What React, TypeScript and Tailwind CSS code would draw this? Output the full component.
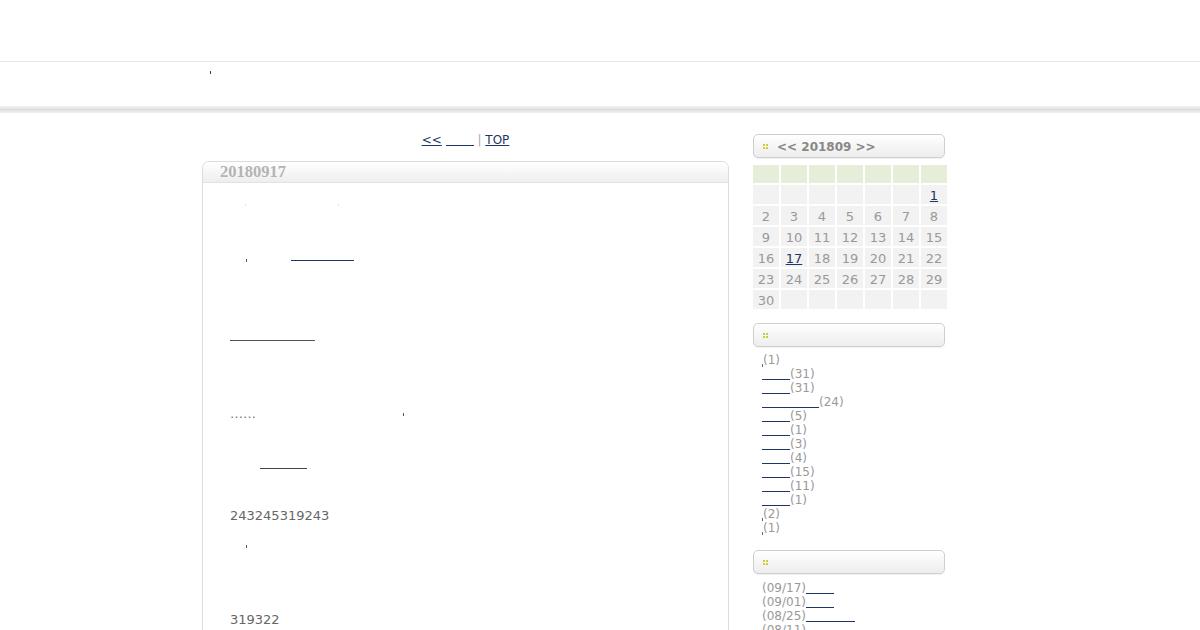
import React from "react";

const sans = { fontFamily: '"DejaVu Sans", Verdana, sans-serif' };

// link whose (missing-glyph) text shows only as an underline
function Blank({ w, c = "border-[#1c3767]", a = "align-[-2px]" }: { w: string; c?: string; a?: string }) {
  return <a href="#" className={`inline-block h-0 border-b ${a} ${w} ${c}`} />;
}

function Tick({ cls = "" }: { cls?: string }) {
  return <span className={`inline-block w-[1px] h-[3px] bg-[#555] align-middle ${cls}`} />;
}

function Dots() {
  return (
    <span className="inline-grid grid-cols-2 gap-[1px] w-[5px] mr-[9px] align-middle">
      <span className="w-[2px] h-[2px] bg-[#c9cc3f]" />
      <span className="w-[2px] h-[2px] bg-[#c9cc3f]" />
      <span className="w-[2px] h-[2px] bg-[#c9cc3f]" />
      <span className="w-[2px] h-[2px] bg-[#c9cc3f]" />
    </span>
  );
}

function BoxHead({ children }: { children?: React.ReactNode }) {
  return (
    <div className="h-[24px] border border-[#cfcfcf] rounded-[5px] bg-gradient-to-b from-white to-[#ededed] shadow-[0_1px_1px_rgba(0,0,0,0.06)] flex items-center pl-[9px] pt-[1px] text-[12px] font-bold text-[#888]">
      <Dots />
      {children}
    </div>
  );
}

const cats: { w?: string; n: string }[] = [
  { n: "(1)" },
  { w: "w-[28px]", n: "(31)" },
  { w: "w-[28px]", n: "(31)" },
  { w: "w-[57px]", n: "(24)" },
  { w: "w-[28px]", n: "(5)" },
  { w: "w-[28px]", n: "(1)" },
  { w: "w-[28px]", n: "(3)" },
  { w: "w-[28px]", n: "(4)" },
  { w: "w-[28px]", n: "(15)" },
  { w: "w-[28px]", n: "(11)" },
  { w: "w-[28px]", n: "(1)" },
  { n: "(2)" },
  { n: "(1)" },
];

const recent = [
  { d: "(09/17)", w: "w-[28px]" },
  { d: "(09/01)", w: "w-[28px]" },
  { d: "(08/25)", w: "w-[49px]" },
  { d: "(08/11)", w: "w-[28px]" },
];

export default function App() {
  const days: (number | null)[] = [null, null, null, null, null, null, 1];
  for (let i = 2; i <= 30; i++) days.push(i);
  while (days.length % 7) days.push(null);

  return (
    <div className="w-[1200px] h-[630px] overflow-hidden bg-white" style={sans}>
      {/* header */}
      <div className="h-[61px]" />
      <div className="h-[1px] bg-[#e6e6e6]" />
      <div className="h-[44px] relative">
        <span className="absolute left-[210px] top-[9px] w-[1px] h-[3px] bg-[#444]" />
      </div>
      <div className="h-[7px] bg-gradient-to-b from-[#f3f3f3] via-[#dedede] to-[#f1f1f1]" />

      <div className="w-[796px] mx-auto flex gap-[24px]">
        {/* main column */}
        <div className="w-[527px] shrink-0">
          <div className="pt-[18px] h-[48px] text-center text-[12px] leading-[18px] text-[#aaa]">
            <a href="#" className="text-[#1c3767] underline">&lt;&lt;</a>{" "}
            <Blank w="w-[28px]" /> |{" "}
            <a href="#" className="text-[#1c3767] underline">TOP</a>
          </div>

          <div className="border border-[#dcdcdc] rounded-t-[7px] h-[480px]">
            <div className="h-[21px] rounded-t-[7px] bg-gradient-to-b from-white to-[#eeeeee] border-b border-[#e2e2e2] pl-[17px] flex items-center">
              <span
                className="text-[16.5px] font-bold text-[#b4b4b4] leading-none"
                style={{ fontFamily: '"Liberation Serif", "DejaVu Serif", serif' }}
              >
                20180917
              </span>
            </div>
            <div className="pl-[27px] text-[13px] leading-[18px] text-[#666]">
              <div className="mt-[12px] h-[18px]">
                <span className="inline-block ml-[15px] w-[1px] h-[2px] bg-[#e6e6e6] align-middle" />
                <span className="inline-block ml-[92px] w-[1px] h-[2px] bg-[#e6e6e6] align-middle" />
              </div>
              <div className="mt-[38px] h-[18px]">
                <Tick cls="ml-[16px]" />
                <span className="ml-[44px]" />
                <Blank w="w-[63px]" a="align-[3px]" />
              </div>
              <div className="mt-[62px] h-[18px]">
                <Blank w="w-[85px]" c="border-[#555]" a="align-[3px]" />
              </div>
              <div className="mt-[56px] h-[18px]">
                <span className="text-[#777]">……</span>
                <Tick cls="ml-[147px]" />
              </div>
              <div className="mt-[36px] h-[18px]">
                <span className="ml-[30px]" />
                <Blank w="w-[47px]" c="border-[#444]" a="align-[3px]" />
              </div>
              <div className="mt-[30px] h-[18px]">243245319243</div>
              <div className="mt-[12px] h-[18px]">
                <Tick cls="ml-[16px]" />
              </div>
              <div className="mt-[56px] h-[18px]">319322</div>
            </div>
          </div>
        </div>

        {/* sidebar */}
        <div className="w-[192px] shrink-0 pt-[21px]">
          <BoxHead>&lt;&lt; 201809 &gt;&gt;</BoxHead>

          <div className="mt-[7px] grid grid-cols-[repeat(7,26px)] gap-[2px] w-[194px] text-[13px] text-[#999]">
            {Array.from({ length: 7 }).map((_, i) => (
              <div key={"h" + i} className="h-[18px] bg-[#e6eed9]" />
            ))}
            {days.map((d, i) => (
              <div key={i} className="h-[19px] pt-[2px] bg-[#f2f2f2] flex items-center justify-center leading-none">
                {d === 1 || d === 17 ? (
                  <a href="#" className="text-[#1c3767] underline">{d}</a>
                ) : (
                  d
                )}
              </div>
            ))}
          </div>

          <div className="mt-[14px]">
            <BoxHead />
          </div>
          <div className="mt-[6px] pl-[9px] text-[12px] leading-[14px] text-[#999]">
            {cats.map((c, i) => (
              <div key={i} className="h-[14px] whitespace-nowrap">
                {c.w ? (
                  <Blank w={c.w} />
                ) : (
                  <span className="inline-block w-[1px] h-[3px] bg-[#666] align-[-3px]" />
                )}
                {c.n}
              </div>
            ))}
          </div>

          <div className="mt-[15px]">
            <BoxHead />
          </div>
          <div className="mt-[7px] pl-[9px] text-[12px] leading-[14px] text-[#999]">
            {recent.map((r, i) => (
              <div key={i} className="h-[14px] whitespace-nowrap">
                {r.d}
                <Blank w={r.w} />
              </div>
            ))}
          </div>
        </div>
      </div>
    </div>
  );
}
